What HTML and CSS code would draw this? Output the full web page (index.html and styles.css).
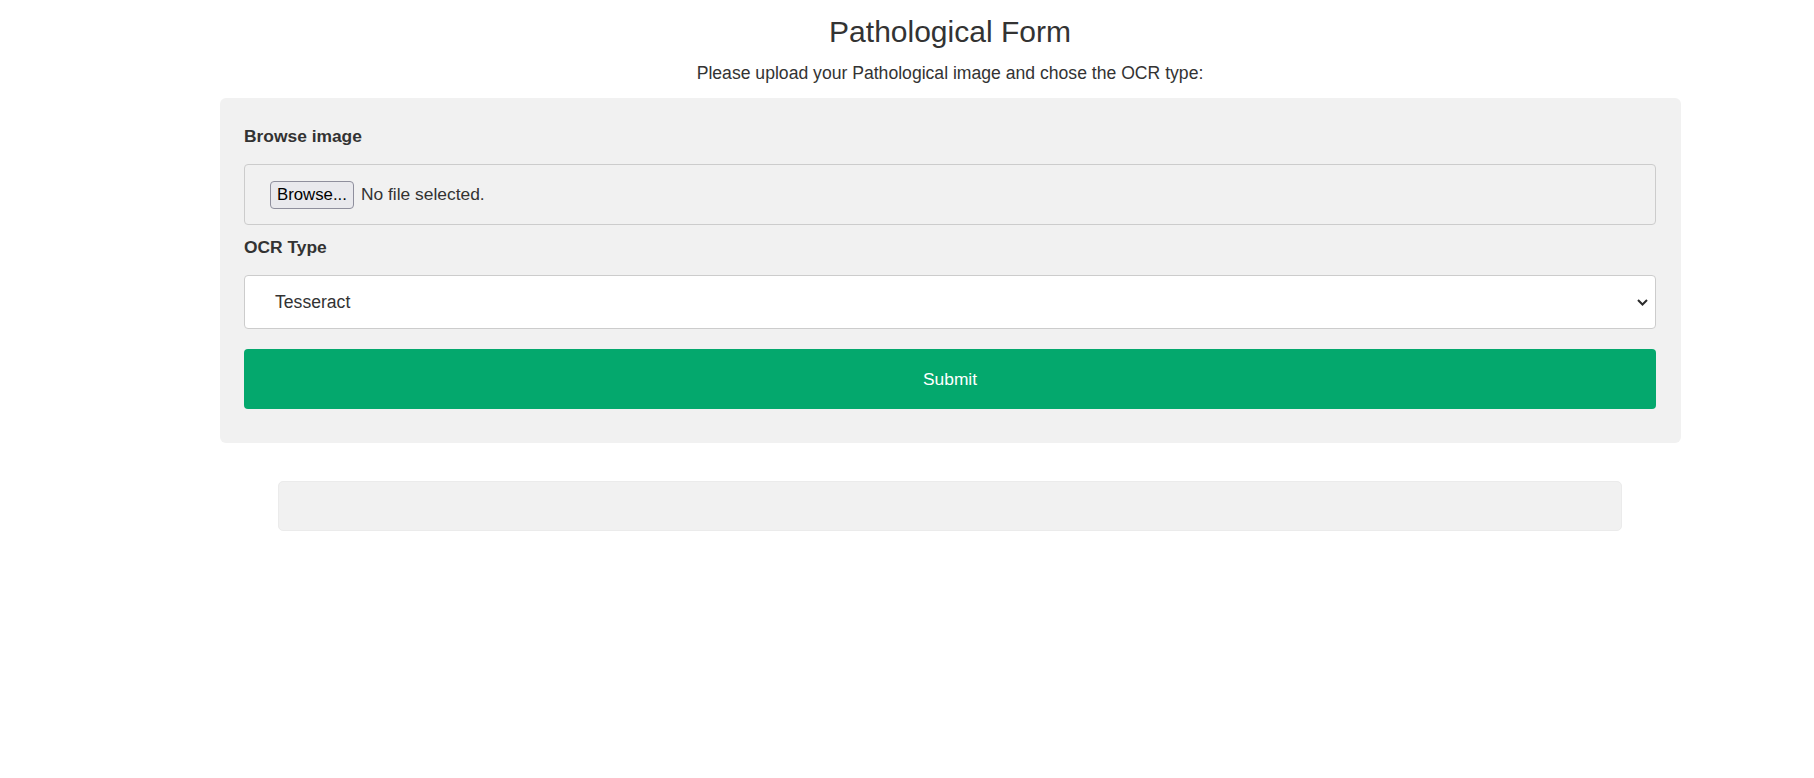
FILE: index.html
```html
<!DOCTYPE html>
<html lang="en">
<head>
<meta charset="utf-8">
<title>Pathological Form</title>
<link rel="stylesheet" href="styles.css">
</head>
<body>
  <header class="page-head">
    <h1 class="title">Pathological Form</h1>
    <p class="subtitle">Please upload your Pathological image and chose the OCR type:</p>
  </header>
  <form class="card">
    <div class="field">
      <label class="field-label">Browse image</label>
      <div class="file-box">
        <span class="file-btn">Browse...</span>
        <span class="file-name">No file selected.</span>
      </div>
    </div>
    <div class="field">
      <label class="field-label">OCR Type</label>
      <div class="select-box">
        <span class="select-value">Tesseract</span>
        <svg class="chevron" width="11" height="7" viewBox="0 0 11 7"><path d="M1 1 L5.5 5.5 L10 1" fill="none" stroke="#2b2b2b" stroke-width="2"/></svg>
      </div>
    </div>
    <button type="button" class="submit">Submit</button>
  </form>
  <div class="result"></div>
</body>
</html>
```
FILE: styles.css
```css
html, body {
  margin: 0;
  padding: 0;
  background: #ffffff;
}
body {
  font-family: "Liberation Sans", Arial, sans-serif;
  color: #333333;
  overflow: hidden;
}
.page-head {
  padding-left: 86px;
  text-align: center;
}
.title {
  margin: 15px 0 0 0;
  font-size: 30px;
  font-weight: normal;
  line-height: 34px;
}
.subtitle {
  margin: 14px 0 0 0;
  font-size: 17.6px;
  line-height: 20px;
}
.card {
  margin: 15px 0 0 220px;
  width: 1461px;
  box-sizing: border-box;
  background: #f1f1f1;
  border-radius: 6px;
  padding: 28px 25px 34px 24px;
  display: flex;
  flex-direction: column;
}
.field {
  display: flex;
  flex-direction: column;
}
.field-label {
  font-weight: bold;
  font-size: 17.4px;
  line-height: 20px;
  margin-bottom: 18px;
}
.file-box {
  height: 61px;
  box-sizing: border-box;
  border: 1px solid #cccccc;
  border-radius: 4px;
  display: flex;
  align-items: center;
  padding-left: 25px;
  margin-bottom: 12px;
}
.file-btn {
  height: 28px;
  box-sizing: border-box;
  padding: 0 6px;
  display: flex;
  align-items: center;
  background: #e9e9ed;
  border: 1px solid #8f8f9d;
  border-radius: 4px;
  color: #000;
  font-size: 16.8px;
}
.file-name {
  margin-left: 7px;
  font-size: 17.4px;
}
.select-box {
  height: 54px;
  box-sizing: border-box;
  background: #ffffff;
  border: 1px solid #cccccc;
  border-radius: 4px;
  display: flex;
  align-items: center;
  justify-content: space-between;
  padding: 0 7px 0 30px;
}
.select-value {
  font-size: 17.6px;
}
.chevron {
  display: block;
}
.submit {
  margin-top: 20px;
  height: 60px;
  border: none;
  border-radius: 4px;
  background: #04a86d;
  color: #ffffff;
  font-family: "Liberation Sans", Arial, sans-serif;
  font-size: 17.4px;
  cursor: pointer;
}
.result {
  margin: 38px 0 0 278px;
  width: 1344px;
  height: 50px;
  box-sizing: border-box;
  background: #f1f1f1;
  border: 1px solid #ebebeb;
  border-radius: 5px;
}
```
